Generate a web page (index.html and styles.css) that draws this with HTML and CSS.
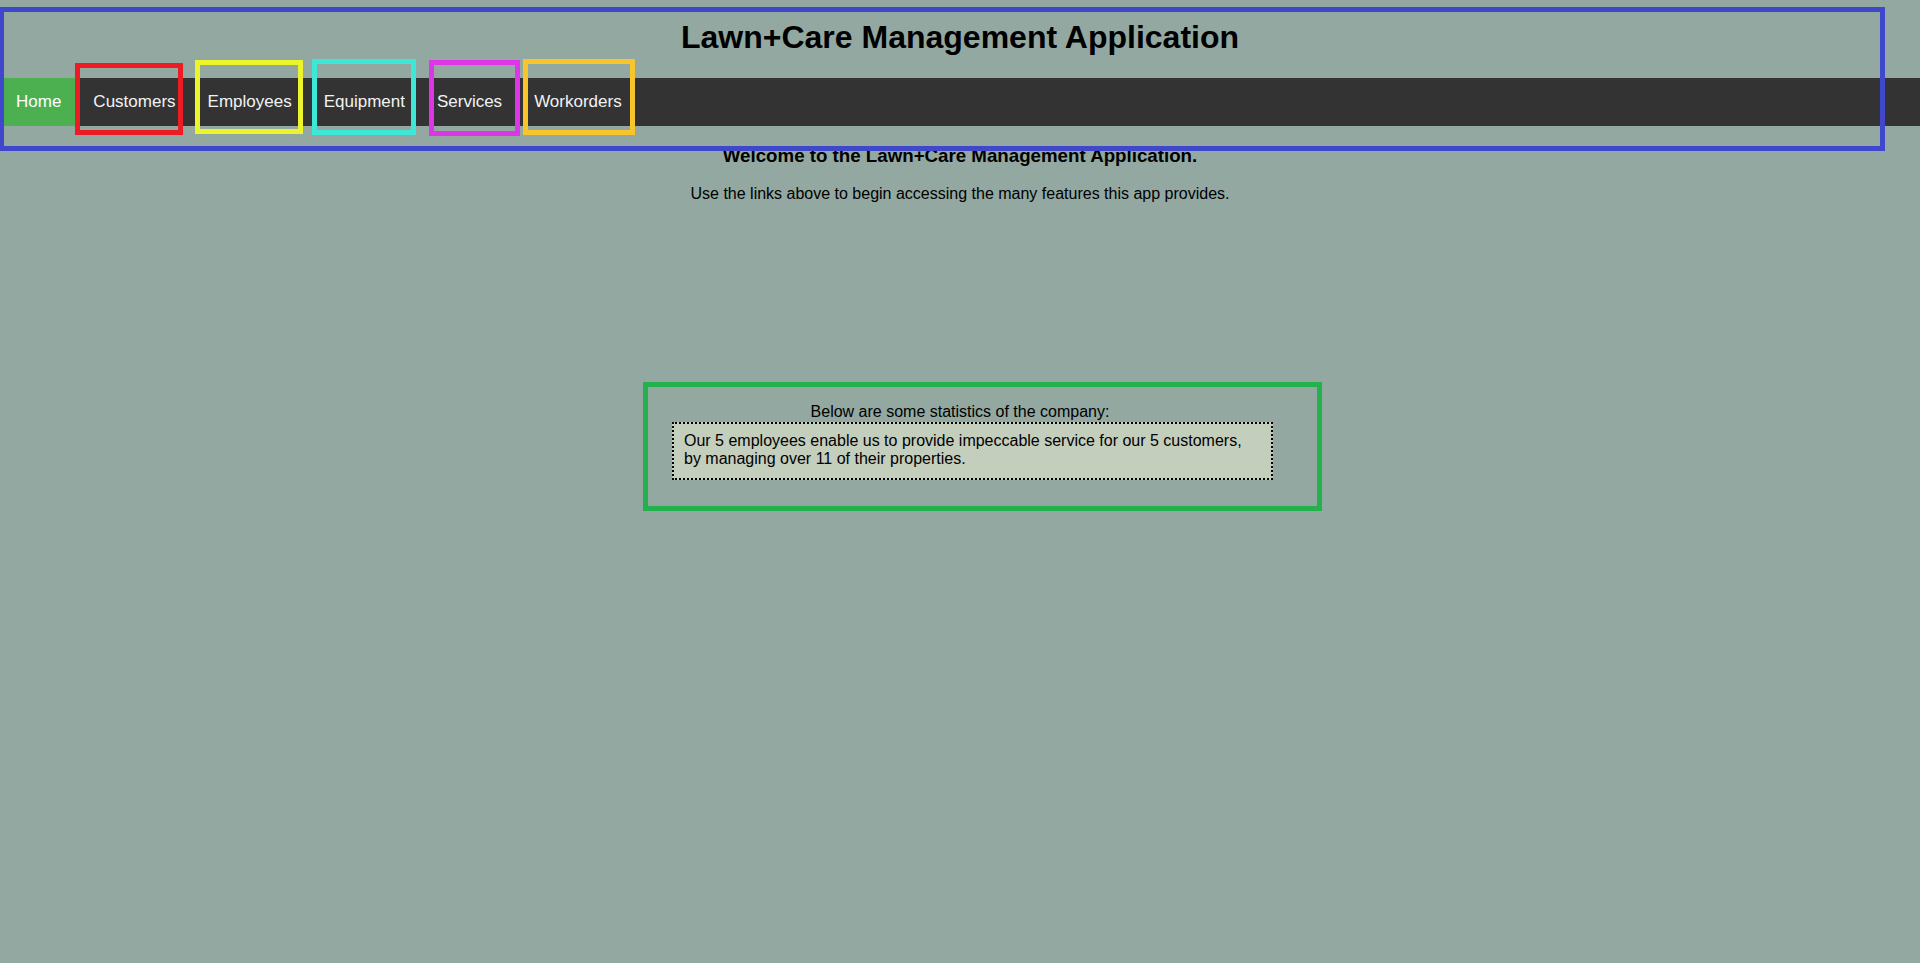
FILE: index.html
```html
<!DOCTYPE html>
<html lang="en">
<head>
<meta charset="utf-8">
<title>Lawn+Care Management Application</title>
<link rel="stylesheet" href="styles.css">
</head>
<body>
<header class="site-header">
  <h1 class="title">Lawn+Care Management Application</h1>
  <nav class="topnav">
    <a class="nav-link active" href="#">Home</a>
    <a class="nav-link" href="#">Customers</a>
    <a class="nav-link" href="#">Employees</a>
    <a class="nav-link" href="#">Equipment</a>
    <a class="nav-link" href="#">Services</a>
    <a class="nav-link" href="#">Workorders</a>
  </nav>
</header>
<main class="content">
  <h3 class="welcome">Welcome to the Lawn+Care Management Application.</h3>
  <p class="intro">Use the links above to begin accessing the many features this app provides.</p>
  <section class="stats">
    <p class="stats-label">Below are some statistics of the company:</p>
    <div class="stats-box">Our 5 employees enable us to provide impeccable service for our 5 customers, by managing over 11 of their properties.</div>
  </section>
</main>
<div class="annotations">
  <div class="ann ann-header"></div>
  <div class="ann ann-customers"></div>
  <div class="ann ann-employees"></div>
  <div class="ann ann-equipment"></div>
  <div class="ann ann-services"></div>
  <div class="ann ann-workorders"></div>
  <div class="ann ann-stats"></div>
</div>
</body>
</html>
```
FILE: styles.css
```css
html, body {
  margin: 0;
  padding: 0;
}

body {
  background: #93a8a1;
  color: #000;
  font-family: "Liberation Sans", Arial, sans-serif;
  min-height: 963px;
  position: relative;
}

.site-header {
  padding-top: 19px;
}

.title {
  margin: 0 0 23px;
  font-size: 32px;
  line-height: 36px;
  font-weight: bold;
  text-align: center;
}

.topnav {
  display: flex;
  background: #333333;
}

.nav-link {
  display: block;
  padding: 14px 16px;
  font-size: 17px;
  line-height: 20px;
  color: #f2f2f2;
  text-decoration: none;
}

.nav-link.active {
  background: #4caf50;
  color: #ffffff;
}

.content {
  text-align: center;
}

.welcome {
  margin: 19px 0 18px;
  font-size: 18.72px;
  font-weight: bold;
}

.intro {
  margin: 0;
  font-size: 16px;
}

.stats {
  margin-top: 200px;
}

.stats-label {
  margin: 0;
  font-size: 16px;
}

.stats-box {
  width: 577px;
  margin: 1px 0 0 calc(50% - 288px);
  padding: 8px 10px 10px;
  border: 2px dotted #000;
  background: #c4cebd;
  font-size: 16px;
  text-align: left;
}

/* annotation overlay boxes */
.annotations {
  position: absolute;
  inset: 0;
  pointer-events: none;
}

.ann {
  position: absolute;
  box-sizing: border-box;
  border: 5px solid;
}

.ann-header {
  left: -1px;
  top: 7px;
  width: 1886px;
  height: 144px;
  border-color: #3f48cc;
}

.ann-customers {
  left: 75px;
  top: 63px;
  width: 108px;
  height: 72px;
  border-color: #ed1c24;
}

.ann-employees {
  left: 195px;
  top: 60px;
  width: 108px;
  height: 74px;
  border-color: #ecf52b;
}

.ann-equipment {
  left: 312px;
  top: 59px;
  width: 104px;
  height: 76px;
  border-color: #3de8d6;
}

.ann-services {
  left: 429px;
  top: 60px;
  width: 91px;
  height: 76px;
  border-color: #dd35e8;
}

.ann-workorders {
  left: 523px;
  top: 59px;
  width: 112px;
  height: 76px;
  border-color: #f8c62b;
}

.ann-stats {
  left: 643px;
  top: 382px;
  width: 679px;
  height: 129px;
  border-color: #22b14c;
}
```
